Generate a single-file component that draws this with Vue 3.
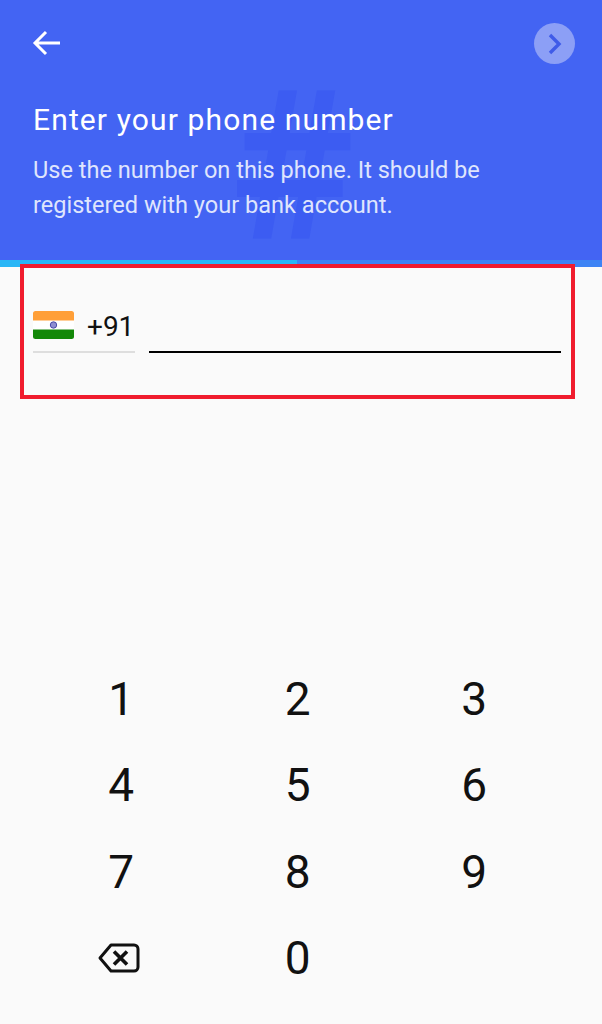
<script setup>
const keys = ['1', '2', '3', '4', '5', '6', '7', '8', '9', 'back', '0', '']
</script>

<template>
  <div class="page">
    <header class="head">
      <span class="hash">#</span>
      <div class="nav">
        <svg class="back" width="30" height="30" viewBox="0 0 30 30" fill="none" stroke="#fff" stroke-width="3">
          <path d="M29 14H4M15 3 4 14l11 11" />
        </svg>
        <div class="next">
          <svg width="16" height="24" viewBox="0 0 16 24" fill="none" stroke="#3f5be8" stroke-width="3.4">
            <path d="M3 3l9 9-9 9" />
          </svg>
        </div>
      </div>
      <h1 class="title">Enter your phone number</h1>
      <p class="sub">Use the number on this phone. It should be registered with your bank account.</p>
    </header>
    <div class="progress"><div class="fill"></div></div>
    <section class="field">
      <div class="code">
        <svg class="flag" width="41" height="28" viewBox="0 0 41 28">
          <rect width="41" height="28" rx="2.5" fill="#fff" />
          <path d="M0 9.5V2.5A2.5 2.5 0 0 1 2.5 0h36A2.5 2.5 0 0 1 41 2.5v7z" fill="#ff9f38" />
          <path d="M0 18.5h41v7a2.500 2.500 0 0 1-2.500 2.500h-36A2.500 2.500 0 0 1 0 25.500z" fill="#138808" />
          <circle cx="20.500" cy="14" r="3.200" fill="#8d8dd0" stroke="#4a4aa8" stroke-width="1" />
        </svg>
        <span class="cc">+91</span>
      </div>
      <div class="number"></div>
    </section>
    <div class="mark"></div>
    <div class="keypad">
      <div v-for="k in keys" :key="k" class="key">
        <svg v-if="k === 'back'" class="del" width="42" height="30" viewBox="0 0 42 30" fill="none" stroke="#111" stroke-width="3">
          <path d="M13 2h23a4 4 0 0 1 4 4v18a4 4 0 0 1-4 4H13L2 15z" stroke-linejoin="round" />
          <path d="M16 8.500l13 13M29 8.500l-13 13" stroke-width="3.600" />
        </svg>
        <template v-else>{{ k }}</template>
      </div>
    </div>
  </div>
</template>

<style scoped>
.page {
  position: relative;
  width: 602px;
  height: 1024px;
  overflow: hidden;
  background: #fafafa;
  font-family: Roboto, sans-serif;
  color: #111;
}
.head {
  position: relative;
  height: 260px;
  box-sizing: border-box;
  padding: 23px 27px 0 33px;
  background: #4364f3;
  color: #fff;
}
.hash {
  position: absolute;
  left: 231px;
  top: 64px;
  font-size: 208px;
  line-height: 1;
  font-weight: 700;
  color: #3c5cf2;
}
.nav {
  position: relative;
  display: flex;
  justify-content: space-between;
  align-items: center;
  height: 41px;
}
.back { margin-left: -2px; }
.next {
  display: flex;
  align-items: center;
  justify-content: center;
  width: 41px;
  height: 41px;
  border-radius: 50%;
  background: #8c9ff6;
}
.title {
  position: relative;
  margin: 38px 0 0;
  font-size: 30px;
  line-height: 36px;
  font-weight: 400;
  letter-spacing: 1.13px;
}
.sub {
  position: relative;
  margin: 15px 0 0;
  width: 460px;
  font-size: 23.55px;
  line-height: 35px;
  color: #dfe5fd;
}
.progress {
  height: 7px;
  background: #3d83f5;
}
.fill {
  width: 297px;
  height: 100%;
  background: #29b6f6;
}
.field {
  display: flex;
  align-items: flex-end;
  gap: 14px;
  padding: 44px 41px 0 33px;
}
.code {
  display: flex;
  align-items: center;
  gap: 13px;
  width: 102px;
  height: 28px;
  padding-bottom: 12px;
  border-bottom: 2px solid #dedede;
}
.flag { flex: none; }
.cc {
  margin-top: 4px;
  font-size: 28px;
  line-height: 32px;
  white-space: nowrap;
}
.number {
  flex: 1;
  height: 2px;
  background: #000;
}
.mark {
  position: absolute;
  left: 20px;
  top: 264px;
  width: 555px;
  height: 135px;
  box-sizing: border-box;
  border: 4px solid #f01c2e;
}
.keypad {
  position: absolute;
  left: 33px;
  top: 656px;
  display: grid;
  grid-template-columns: repeat(3, 176.500px);
  grid-auto-rows: 86.300px;
}
.key {
  display: flex;
  align-items: center;
  justify-content: center;
  font-size: 46px;
  line-height: 1;
}
.del { transform: translateX(-2px); }
</style>
